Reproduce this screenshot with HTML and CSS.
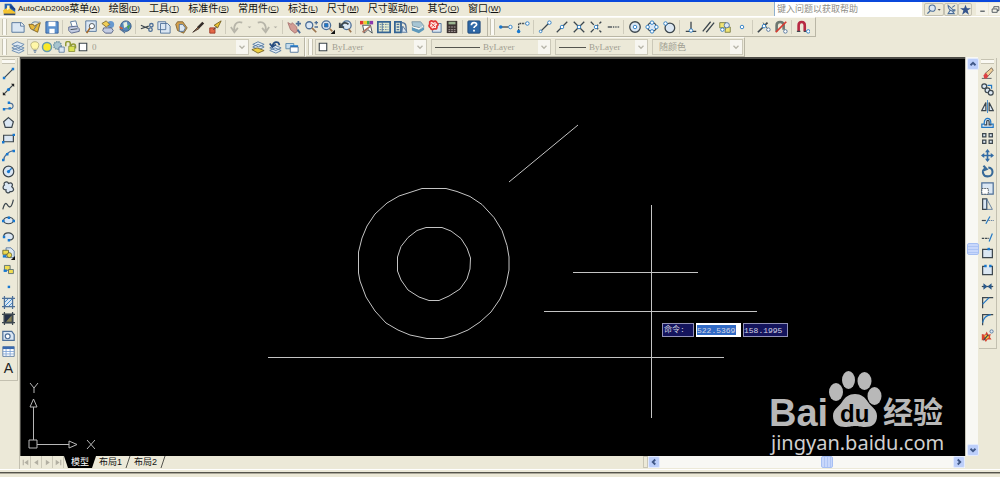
FILE: index.html
```html
<!DOCTYPE html>
<html lang="zh-CN">
<head>
<meta charset="utf-8">
<title>AutoCAD2008</title>
<link rel="stylesheet" href="styles.css">
</head>
<body>
<header class="menubar">
  <svg class="logo" viewBox="0 0 16 16"><path fill="#2463b5" d="M2 1h8l5 6v7H2z"/><path fill="#1c3f86" d="M9 2l6 5v2L9 6z"/><path fill="#f4c430" d="M0 9l7-4 3 3 5 3v3H1z"/><path fill="#3c4d6b" d="M1 13h14v2H1z"/><path fill="#fff5c0" d="M5 3l3 0 0 4-3 2z"/></svg>
  <nav class="menus">
    <button><i>AutoCAD2008</i>菜单<i>(<u>A</u>)</i></button>
    <button>绘图<i>(<u>D</u>)</i></button>
    <button>工具<i>(<u>T</u>)</i></button>
    <button>标准件<i>(<u>S</u>)</i></button>
    <button>常用件<i>(<u>C</u>)</i></button>
    <button>标注<i>(<u>L</u>)</i></button>
    <button>尺寸<i>(<u>M</u>)</i></button>
    <button>尺寸驱动<i>(<u>P</u>)</i></button>
    <button>其它<i>(<u>O</u>)</i></button>
    <button>窗口<i>(<u>W</u>)</i></button>
  </nav>
  <input class="search" type="text" aria-label="帮助" placeholder="键入问题以获取帮助">
  <div class="infobar">
    <button class="find" aria-label="搜索"><svg viewBox="0 0 16 16"><circle class="s-steel f-ice w2" cx="9" cy="6" r="4.500"/><path class="s-steel w3" d="M6 10l-4 4"/></svg><svg class="caret" viewBox="0 0 8 16"><path fill="#555" d="M1 7h5l-2.500 3z"/></svg></button>
    <button aria-label="通讯中心"><svg viewBox="0 0 16 16"><path class="s-steel f-ice w2" d="M3 2c0 6 4 9 9 8zM6 9l-3 5h9l-3-4M9 5l4-3M11 8l3 1"/></svg></button>
    <button aria-label="收藏夹"><svg viewBox="0 0 16 16"><path fill="#34548c" d="M8 1l2 5h6l-5 3.500 2 6L8 12l-5 3.500 2-6L0 6h6z"/></svg></button>
  </div>
  <div class="wincontrols">
    <button aria-label="最小化"><svg viewBox="0 0 16 16"><path class="s-dark w3" d="M4 11h8"/></svg></button>
    <button aria-label="还原"><svg viewBox="0 0 16 16"><path class="s-dark w2" d="M5 6V3h9v7h-3M2 7h9v6H2z"/></svg></button>
  </div>
</header>

<div class="toolrow">
  <div class="toolbar standard">
    <span class="grip"></span>
    <button aria-label="新建"><svg viewBox="0 0 16 16"><path class="s-steel f-ice" d="M1 3h11l3 3v8H1z"/><path class="s-steel f-white" d="M11 3v4h4"/></svg></button>
    <button aria-label="打开"><svg viewBox="0 0 16 16"><path fill="#e8b93c" stroke="#80601c" d="M1 5h5l1 2 7-4-3 11-8-4z"/><path class="s-steel" d="M4 4c4-4 8 0 9-2M10 6l-4 6"/></svg></button>
    <button aria-label="保存"><svg viewBox="0 0 16 16"><path fill="#5d92cf" stroke="#315c9b" d="M1 2h14v13H1z"/><path class="f-white" d="M4 2h8v5H4zM5 10h6v5H5z"/></svg></button>
    <span class="sep"></span>
    <button aria-label="打印"><svg viewBox="0 0 16 16"><path class="s-steel f-white" d="M4 2l6-1 2 7H6z"/><path fill="#c3cce2" stroke="#566489" d="M2 8l9-1 3 3v3l-9 2-3-3z"/><path class="s-dark" d="M4 11l8-1"/></svg></button>
    <button aria-label="打印预览"><svg viewBox="0 0 16 16"><path class="s-steel f-ice" d="M2 1h12v12H2z"/><circle class="s-dark f-white" cx="9" cy="7" r="3"/><path stroke="#a66b2c" stroke-width="2" d="M7 9l-4 6"/></svg></button>
    <button aria-label="发布"><svg viewBox="0 0 16 16"><circle cx="11" cy="5" r="4" fill="#6799cf"/><path fill="#f0ce55" stroke="#7e6a35" d="M1 4l5-3 4 4-4 3z"/><path fill="#c3cce2" stroke="#4f5d80" d="M3 9h9l2 3-2 3H5l-3-3z"/></svg></button>
    <button aria-label="三维DWF"><svg viewBox="0 0 16 16"><circle cx="9" cy="7" r="6" fill="#5789bd" stroke="#335782"/><path fill="#e6efe0" d="M6 3l4-1 1 5-4 2z"/><path fill="#47a34b" d="M10 7l4-2-2 6z"/><path fill="#d45f34" d="M1 7l5 2-3 3z"/><path class="s-steel w2" d="M2 10l4 3 2 2"/></svg></button>
    <span class="sep"></span>
    <button aria-label="剪切"><svg viewBox="0 0 16 16"><path class="s-dark w2" d="M1 6l9 4M1 10l9-3"/><circle class="s-steel w2" cx="13" cy="6" r="2"/><circle class="s-steel w2" cx="12" cy="11" r="2"/></svg></button>
    <button aria-label="复制"><svg viewBox="0 0 16 16"><path class="s-steel f-ice" d="M1 2h9v9H1zM4 4h8l3 3v8H4z"/></svg></button>
    <button aria-label="粘贴"><svg viewBox="0 0 16 16"><path fill="#d5a04a" stroke="#7d6132" d="M4 2h6l5 7-4 6-7-3-2-7z"/><path class="s-steel f-ice" d="M6 5h4l3 4-2 4H6z"/></svg></button>
    <button aria-label="特性匹配"><svg viewBox="0 0 16 16"><path stroke="#332c28" stroke-width="3" d="M14 3L8 9"/><path fill="#9b6c45" stroke="#483c35" d="M8 8l-6 6 7-4z"/></svg></button>
    <button aria-label="块编辑器"><svg viewBox="0 0 16 16"><path fill="#efc632" stroke="#715d1d" d="M15 1l-4 8-4-3z"/><path fill="#e46846" stroke="#9c3826" d="M2 9h6v6H2z"/><path class="s-dark" d="M10 8l-4 3"/></svg></button>
    <span class="sep"></span>
    <button aria-label="放弃"><svg viewBox="0 0 16 16"><path class="s-gray w3" d="M14 3C7 1 4 6 5 12M1 8l4 6 4-5"/></svg></button>
    <button class="drop" aria-label="放弃列表"><svg viewBox="0 0 8 16"><path fill="#b1afa4" d="M1 7h6L4 10z"/></svg></button>
    <button aria-label="重做"><svg viewBox="0 0 16 16"><path class="s-gray w3" d="M2 3c7-2 10 3 9 9M7 9l4 5 4-6"/></svg></button>
    <button class="drop" aria-label="重做列表"><svg viewBox="0 0 8 16"><path fill="#b1afa4" d="M1 7h6L4 10z"/></svg></button>
    <span class="sep"></span>
    <button aria-label="实时平移"><svg viewBox="0 0 16 16"><path fill="#d39c94" stroke="#a87470" d="M1 3l4 2 1-2 5 5 1 5-3 2-5-4z"/><path class="s-steel w3" d="M13 1v6M10 4h6M12 11l3 4"/></svg></button>
    <button aria-label="实时缩放"><svg viewBox="0 0 16 16"><circle class="s-steel f-ice w2" cx="6" cy="6" r="4"/><path stroke="#9c7650" stroke-width="2" d="M9 9l5 5"/><path class="s-steel w2" d="M12 3h4M14 1v4M12 8h4"/></svg></button>
    <button aria-label="窗口缩放"><svg viewBox="0 0 16 16"><circle class="s-steel f-ice w2" cx="6" cy="6" r="5"/><path class="s-steel f-blue" d="M4 4h4v4H4z"/><path stroke="#9c7650" stroke-width="2" d="M10 10l3 3"/><path fill="#111" d="M16 11v5h-5z"/></svg></button>
    <button aria-label="缩放上一个"><svg viewBox="0 0 16 16"><circle class="s-steel f-ice w2" cx="10" cy="6" r="5"/><path stroke="#9c7650" stroke-width="2" d="M12 10l3 4"/><path class="s-dark w3" d="M3 7c2-4 6-5 9-2M2 3v5h5"/></svg></button>
    <span class="sep"></span>
    <button aria-label="特性"><svg viewBox="0 0 16 16"><path fill="#e23535" d="M0 1h4v4H0z"/><path fill="#efcd2a" d="M4 1h4v4H4z"/><path fill="#45a94b" d="M8 1h3v4H8z"/><path fill="#8b37ad" d="M11 1h4v4h-4z"/><path class="s-dark f-white" d="M3 6h9l2 9-5-4-4 4z"/><path stroke="#ae7562" stroke-width="2" d="M3 14L12 7"/></svg></button>
    <button aria-label="设计中心"><svg viewBox="0 0 16 16"><path fill="#e8edcf" stroke="#346494" stroke-width="2" d="M1 2h14v12H1z"/><path class="s-steel" stroke-dasharray="2 1" d="M3 5h10M3 8h10M3 11h10"/><path class="s-steel" d="M6 2v12"/></svg></button>
    <button aria-label="工具选项板"><svg viewBox="0 0 16 16"><path fill="#dfe7d2" stroke="#346494" stroke-width="2" d="M1 2h7v12H1z"/><path class="s-steel w2" d="M3 5h3M3 8h3M3 11h3M9 3c5 0 5 4 5 10"/><path class="s-steel f-ice" d="M10 7l5 7H9z"/></svg></button>
    <button aria-label="图纸集管理器"><svg viewBox="0 0 16 16"><path fill="#a7c6d4" stroke="#7995a4" d="M1 2h10l4 5-4 2-9-2z"/><path fill="#5e99bb" d="M1 8l8 3 6-3v3l-6 4-8-3z"/><path class="s-white" d="M2 8l7 2 5-3"/></svg></button>
    <button aria-label="标记集管理器"><svg viewBox="0 0 16 16"><path class="s-steel f-ice" d="M5 4h10v10H5z"/><path fill="#ffe4df" stroke="#e13635" stroke-width="2" d="M2 2q2-2 4 0q3-2 4 1q3 2 0 4q1 4-3 3q-3 2-4-1q-3-2-1-4z"/><path stroke="#e13635" d="M4 4l4 4M8 4l-4 4"/></svg></button>
    <button aria-label="快速计算器"><svg viewBox="0 0 16 16"><path fill="#3c3433" d="M2 1h12v14H2z"/><path fill="#9bb591" d="M4 2h8v3H4z"/><path stroke="#b9adad" stroke-width="1" stroke-dasharray="2 1" d="M4 8h8M4 11h8M4 13h8"/></svg></button>
    <span class="sep"></span>
    <button aria-label="帮助"><svg viewBox="0 0 16 16"><rect x="1" y="1" width="14" height="14" rx="1" fill="#2d67a6" stroke="#1e4777"/><path class="s-white w3" d="M5 6c0-4 6-4 6-1 0 2-3 2-3 4M8 11v2"/></svg></button>
  </div>
  <div class="toolbar">
    <span class="grip"></span>
    <button aria-label="临时追踪点"><svg viewBox="0 0 16 16"><path class="s-dark w2" d="M2 8h9"/><circle class="f-blue" cx="2" cy="8" r="2"/><circle class="s-blue f-white" cx="13" cy="8" r="2"/></svg></button>
    <button aria-label="捕捉自"><svg viewBox="0 0 16 16"><path class="s-dark w2" stroke-dasharray="2 1" d="M3 12V4h8"/><circle class="f-blue" cx="3" cy="13" r="2"/><circle class="s-blue f-white" cx="13" cy="4" r="2"/></svg></button>
    <span class="sep"></span>
    <button aria-label="端点"><svg viewBox="0 0 16 16"><path class="s-dark w2" d="M3 13L12 4"/><circle class="s-blue f-white" cx="13" cy="3" r="2"/><circle class="s-blue f-white" cx="3" cy="13" r="1.500"/></svg></button>
    <button aria-label="中点"><svg viewBox="0 0 16 16"><path class="s-dark w2" d="M2 14L14 2"/><circle class="s-blue f-white" cx="8" cy="8" r="2"/></svg></button>
    <button aria-label="交点"><svg viewBox="0 0 16 16"><path class="s-dark w2" d="M2 2l12 12M2 14L14 2"/><circle class="s-blue f-white" cx="8" cy="8" r="2"/></svg></button>
    <button aria-label="外观交点"><svg viewBox="0 0 16 16"><path class="s-dark w2" stroke-dasharray="5 2" d="M2 2l12 12M2 14L14 2"/><circle class="s-blue f-white" cx="8" cy="8" r="2"/></svg></button>
    <button aria-label="延长线"><svg viewBox="0 0 16 16"><path class="s-dark w2" d="M2 8h5"/><path class="s-dark w2" stroke-dasharray="1 1" d="M8 8h7"/></svg></button>
    <span class="sep"></span>
    <button aria-label="圆心"><svg viewBox="0 0 16 16"><circle class="s-dark f-ice w2" cx="8" cy="8" r="6"/><circle class="s-blue f-white" cx="8" cy="8" r="2"/></svg></button>
    <button aria-label="象限点"><svg viewBox="0 0 16 16"><circle class="s-dark f-ice w2" cx="8" cy="8" r="5"/><g class="s-blue f-white"><circle cx="8" cy="3" r="2"/><circle cx="8" cy="13" r="2"/><circle cx="3" cy="8" r="2"/><circle cx="13" cy="8" r="2"/></g></svg></button>
    <button aria-label="切点"><svg viewBox="0 0 16 16"><circle class="s-dark f-ice w2" cx="9" cy="9" r="5.500"/><circle class="s-blue f-white" cx="4" cy="4" r="2"/></svg></button>
    <span class="sep"></span>
    <button aria-label="垂足"><svg viewBox="0 0 16 16"><path class="s-dark w2" d="M8 2v9M2 13h12"/><circle class="s-blue f-white" cx="8" cy="12" r="2"/></svg></button>
    <button aria-label="平行线"><svg viewBox="0 0 16 16"><path class="s-dark w2" d="M2 13L11 2M6 14l9-11"/></svg></button>
    <button aria-label="插入点"><svg viewBox="0 0 16 16"><path fill="#f2e573" stroke="#777c43" d="M2 3h7v6H2zM9 8h5v6H8z"/><circle class="s-steel f-ice" cx="10" cy="6" r="3"/><circle class="s-blue f-white" cx="5" cy="11" r="2"/></svg></button>
    <button aria-label="节点"><svg viewBox="0 0 16 16"><circle class="s-blue f-white" cx="8" cy="8" r="2"/></svg></button>
    <span class="sep"></span>
    <button aria-label="最近点"><svg viewBox="0 0 16 16"><path class="s-dark w3" d="M1 14L12 3"/><path class="s-dark" d="M7 3l5 7"/><circle class="s-blue f-white" cx="8" cy="7" r="2"/><circle class="s-steel f-white" cx="13" cy="11" r="2"/></svg></button>
    <button aria-label="无捕捉"><svg viewBox="0 0 16 16"><path stroke="#6d7771" stroke-width="3" d="M3 13V6c0-5 8-5 8 0v5"/><path stroke="#d93b31" stroke-width="2" d="M2 14L14 2"/><circle class="s-steel f-white" cx="13" cy="13" r="2"/></svg></button>
    <span class="sep"></span>
    <button aria-label="对象捕捉设置"><svg viewBox="0 0 16 16"><path stroke="#b72942" stroke-width="3" d="M3 13V6c0-5 7-5 7 0v7"/><path class="s-dark w2" d="M1 13h4M9 13h3"/><circle class="s-blue f-white" cx="14" cy="13" r="2"/></svg></button>
  </div>
</div>

<div class="toolrow">
  <div class="toolbar">
    <span class="grip"></span>
    <button class="wide" aria-label="图层特性管理器"><svg viewBox="0 0 16 16"><path fill="#dfeaf4" stroke="#6688ad" d="M1 12l6-3 8 3-6 3zM1 9l6-3 8 3-6 3zM1 5l6-3 8 3-6 4z"/></svg></button>
    <div class="combo combo-layer">
      <svg viewBox="0 0 16 16"><path fill="#fff7a8" stroke="#a5a06d" d="M5 11C-1 3 5 1 8 1s8 2 3 10z"/><path class="s-steel w2" d="M6 13h4M7 15h2"/></svg>
      <svg viewBox="0 0 16 16"><circle cx="8" cy="8" r="6" fill="#f9e928" stroke="#669ab1" stroke-width="2"/></svg>
      <svg viewBox="0 0 16 16"><circle cx="6" cy="6" r="5" fill="#a7c4cf" stroke="#7397a7" stroke-width="2" stroke-dasharray="2 1"/><path class="s-steel f-ice" d="M8 8h7v7H8z"/></svg>
      <svg viewBox="0 0 16 16"><path stroke="#929b38" stroke-width="2" d="M1 7V3c0-3 6-3 6 0v4M8 7c0-4 6-4 6 0v3"/><path fill="#dae253" stroke="#7e872f" d="M5 7h8v7H5z"/></svg>
      <svg viewBox="0 0 16 16"><path class="s-dark f-white w2" d="M3 3h10v10H3z"/></svg>
      <select aria-label="图层"><option>0</option></select>
      <span class="arrow"><svg viewBox="0 0 16 16"><path class="s-gray w3" d="M4 6l4 4 4-4"/></svg></span>
    </div>
    <button aria-label="将对象的图层置为当前"><svg viewBox="0 0 16 16"><path fill="#dfeaf4" stroke="#5478a0" d="M2 8l6-3 7 3-6 3zM2 5l6-3 7 3-6 3z"/><path fill="#edcf42" stroke="#75652a" d="M1 11l6-2 8 3-7 3z"/></svg></button>
    <button aria-label="上一个图层"><svg viewBox="0 0 16 16"><path fill="#dfeaf4" stroke="#5478a0" d="M2 12l6-3 7 3-6 3zM2 9l6-3 7 3-6 3z"/><path stroke="#274d80" stroke-width="2" d="M13 6c-1-6-7-4-8 1M2 4l3 4 4-3"/></svg></button>
    <button aria-label="图层状态管理器"><svg viewBox="0 0 16 16"><path fill="#c6dceb" stroke="#5888aa" d="M1 4h9v6H1z"/><path class="f-blue" d="M6 6h9v3H6z"/><path class="s-steel f-white" d="M6 8h9v6H6z"/></svg></button>
  </div>
  <div class="toolbar props">
    <span class="grip"></span>
    <div class="combo combo-color">
      <svg viewBox="0 0 16 16"><path class="s-dark f-white w2" d="M3 3h10v10H3z"/></svg>
      <select aria-label="颜色"><option>ByLayer</option></select>
      <span class="arrow"><svg viewBox="0 0 16 16"><path class="s-gray w3" d="M4 6l4 4 4-4"/></svg></span>
    </div>
    <div class="combo combo-type">
      <span class="stroke"></span>
      <select aria-label="线型"><option>ByLayer</option></select>
      <span class="arrow"><svg viewBox="0 0 16 16"><path class="s-gray w3" d="M4 6l4 4 4-4"/></svg></span>
    </div>
    <div class="combo combo-weight">
      <span class="stroke"></span>
      <select aria-label="线宽"><option>ByLayer</option></select>
      <span class="arrow"><svg viewBox="0 0 16 16"><path class="s-gray w3" d="M4 6l4 4 4-4"/></svg></span>
    </div>
    <div class="combo combo-plot">
      <select aria-label="打印样式"><option>随颜色</option></select>
      <span class="arrow"><svg viewBox="0 0 16 16"><path class="s-gray w3" d="M4 6l4 4 4-4"/></svg></span>
    </div>
  </div>
</div>

<div class="workspace">
  <aside class="side">
    <div class="palette">
      <span class="hgrip"></span>
      <div class="stack draw">
        <button aria-label="直线"><svg viewBox="0 0 16 16"><path class="s-dark w2" d="M3 13L13 3"/><path class="f-blue" d="M1 12h3v3H1zM12 1h3v3h-3z"/></svg></button>
        <button aria-label="构造线"><svg viewBox="0 0 16 16"><path class="s-dark w2" d="M2 14L14 2"/><path fill="#222" d="M1 15v-4l4 4zM15 1v4l-4-4z"/><circle class="f-blue" cx="8" cy="8" r="2"/></svg></button>
        <button aria-label="多段线"><svg viewBox="0 0 16 16"><path class="s-steel w2" d="M2 12h8c5 0 5-7-1-7"/><path class="f-blue" d="M1 11h3v3H1zM8 10h3v3H8zM7 3h3v3H7z"/></svg></button>
        <button aria-label="正多边形"><svg viewBox="0 0 16 16"><path class="s-dark f-ice w2" d="M8 2l6 5-2 7H4L2 7z"/></svg></button>
        <button aria-label="矩形"><svg viewBox="0 0 16 16"><path class="s-dark f-ice w2" d="M2 4h12v8H2z"/><path class="f-blue" d="M0 11h3v3H0zM13 2h3v3h-3z"/></svg></button>
        <button aria-label="圆弧"><svg viewBox="0 0 16 16"><path class="s-steel w2" d="M2 14C2 8 8 3 14 2"/><path class="f-blue" d="M0 12h3v3H0zM5 5h3v3H5zM13 1h3v3h-3z"/></svg></button>
        <button aria-label="圆"><svg viewBox="0 0 16 16"><circle class="s-dark f-ice w2" cx="8" cy="8" r="6.500"/><path class="s-blue w2" d="M8 8l4-4"/><circle class="f-blue" cx="8" cy="8" r="2"/></svg></button>
        <button aria-label="修订云线"><svg viewBox="0 0 16 16"><path class="s-dark f-ice w2" d="M3 5c-2-4 4-5 5-2 4-2 6 1 4 4 4 3 2 7-2 6-2 3-6 1-5-2-5 0-4-5-2-6z"/></svg></button>
        <button aria-label="样条曲线"><svg viewBox="0 0 16 16"><path class="s-dark w2" d="M1 14c2-8 4-9 6-5 3 4 5 2 7-7"/></svg></button>
        <button aria-label="椭圆"><svg viewBox="0 0 16 16"><ellipse class="s-dark f-ice w2" cx="8" cy="8" rx="6" ry="4"/><path class="f-blue" d="M0 7h3v3H0zM13 7h3v3h-3zM7 3h3v3H7z"/></svg></button>
        <button aria-label="椭圆弧"><svg viewBox="0 0 16 16"><path class="s-dark f-ice w2" d="M2 8c1-7 13-5 12 1 0 2-3 4-6 3"/><path class="f-blue" d="M1 7h3v3H1zM7 11h3v3H7z"/></svg></button>
        <button aria-label="插入块"><svg viewBox="0 0 16 16"><path class="s-steel f-ice" d="M5 1h6l4 4v8H5z"/><path fill="#f0dc50" stroke="#656530" d="M1 4h7v5H1z"/><circle cx="9" cy="10" r="3" fill="#f0dc50" stroke="#656530"/><path class="f-blue" d="M1 10h4v3H1z"/><path fill="#111" d="M16 11v5h-5z"/></svg></button>
        <button aria-label="创建块"><svg viewBox="0 0 16 16"><path fill="#f0dc50" stroke="#4c6473" d="M3 3h7v6H3z"/><path fill="#f0dc50" stroke="#4c6473" d="M8 8h6v5H8z"/><path class="f-blue" d="M2 8h4v3H2z"/></svg></button>
        <button aria-label="点"><svg viewBox="0 0 16 16"><path class="f-blue" d="M7 7h3v3H7z"/></svg></button>
        <button aria-label="图案填充"><svg viewBox="0 0 16 16"><path class="s-blue f-ice" d="M3 3h10v10H3zM3 8l5-5M3 13L13 3M8 13l5-5"/><path class="s-steel w2" d="M3 0v16M13 0v16M0 3h16M0 13h16"/></svg></button>
        <button aria-label="渐变色"><svg viewBox="0 0 16 16"><path fill="#253149" d="M2 2h12v12H2z"/><path fill="#8a8455" d="M5 12l7-8v8z"/><path class="s-dark w2" d="M3 0v16M13 0v16M0 3h16M0 13h16"/></svg></button>
        <button aria-label="面域"><svg viewBox="0 0 16 16"><path class="s-steel f-ice w2" d="M1 3h11l3 4v7H1z"/><circle class="s-steel f-white w2" cx="7" cy="9" r="3"/></svg></button>
        <button aria-label="表格"><svg viewBox="0 0 16 16"><path class="s-steel f-white" d="M1 2h14v12H1z"/><path fill="#3969af" d="M1 2h14v3H1z"/><path stroke="#7aa0d4" d="M1 8h14M1 11h14M5 5v9M10 5v9"/></svg></button>
        <button class="letter" aria-label="多行文字">A</button>
      </div>
    </div>
  </aside>

  <main class="viewframe">
    <div class="upper">
      <div class="canvas">
        <svg class="drawing" viewBox="21 59 943 397">
          <path d="M509 182L578 125M268 357.500H724M544 311.500H757"/>
          <path d="M573 272.500H698M651.500 205V418"/>
          <polygon points="422,188.500 446,188.500 457,191.500 470,196.500 482,204.500 494,217.500 502,230.500 507,245.500 509,257 509,270 506,285 500,299 491,312 480,322 468,330 456,335 443,338.500 427,338.500 410,335 398,330 386,323 375,311 366,297 360,281 358.500,273 358.500,252 362,238 367,226 375,214 387,203 399,196"/>
          <polygon points="426,227.500 442,227.500 451,231 461,238.500 467,248 470.500,258 470,269 467,279 460,289 449,296 439,300.500 429,300.500 419,297 408,290 401,280 397.500,271 397.500,257 401,246.500 408,237.500 417,230.500"/>
        </svg>
        <svg class="ucs" viewBox="0 0 70 70">
          <path d="M4 59h8v8H4zM8.500 59V26M12 63.500h32M5 26l3.500-8 3.500 8zM44 60l8 3.500-8 3.500zM5 2l4 5 4-5M9 7v5M62 59l8 9M70 59l-8 9"/>
        </svg>
        <div class="dyn">
          <label for="dx">命令:</label>
          <input id="dx" class="picked" value="522.5369">
          <input aria-label="Y" value="158.1995">
        </div>
        <svg class="brand" viewBox="0 0 180 90">
          <g class="paw"><ellipse cx="67" cy="26" rx="7" ry="9"/><ellipse cx="79.500" cy="14" rx="6.500" ry="9"/><ellipse cx="95.500" cy="15" rx="7" ry="9"/><ellipse cx="105.500" cy="30" rx="7" ry="9"/><path d="M86 28c-6 0-10 3-13 8-3 5-9 7-9 14 0 8 6 11 12 11 5 0 6-1 10-1s5 1 10 1c7 0 12-3 12-11 0-7-6-9-9-14-3-5-7-8-13-8z"/></g>
          <text class="bai" x="0" y="60">Bai</text>
          <text class="du" x="71" y="56">du</text>
          <text class="exp" x="114" y="57">经验</text>
          <text class="url" x="2" y="84">jingyan.baidu.com</text>
        </svg>
      </div>
      <div class="vscroll">
        <button aria-label="向上"><svg viewBox="0 0 16 16"><path d="M4 10l4-4 4 4"/></svg></button>
        <span class="thumb"></span>
        <button aria-label="向下"><svg viewBox="0 0 16 16"><path d="M4 6l4 4 4-4"/></svg></button>
      </div>
    </div>
    <div class="lower">
      <div class="tabnav">
        <button aria-label="第一个"><svg viewBox="0 0 16 16"><path d="M3 3h2v10H3zM13 3v10L6 8z"/></svg></button>
        <button aria-label="上一个"><svg viewBox="0 0 16 16"><path d="M11 3v10L4 8z"/></svg></button>
        <button aria-label="下一个"><svg viewBox="0 0 16 16"><path d="M5 3v10l7-5z"/></svg></button>
        <button aria-label="最后一个"><svg viewBox="0 0 16 16"><path d="M3 3v10l7-5zM11 3h2v10h-2z"/></svg></button>
      </div>
      <div class="tabs">
        <button class="tab active">模型</button>
        <button class="tab">布局1</button>
        <svg class="slash" viewBox="0 0 6 12"><path d="M1 12L5 0"/></svg>
        <button class="tab">布局2</button>
        <svg class="slash" viewBox="0 0 6 12"><path d="M1 12L5 0"/></svg>
      </div>
      <div class="hscroll">
        <span class="splitter"></span>
        <button aria-label="向左"><svg viewBox="0 0 16 16"><path d="M10 4L6 8l4 4"/></svg></button>
        <span class="track"><span class="thumb"></span></span>
        <button aria-label="向右"><svg viewBox="0 0 16 16"><path d="M6 4l4 4-4 4"/></svg></button>
      </div>
    </div>
  </main>

  <aside class="side right">
    <div class="palette">
      <span class="hgrip"></span>
      <div class="stack modify">
        <button aria-label="删除"><svg viewBox="0 0 16 16"><path class="s-dark" d="M1 14h12"/><path fill="#f1cf99" stroke="#655a4d" d="M5 8L13 1l2 3-7 8z"/><path fill="#dc4145" d="M3 10l3-3 3 4-2 3H4z"/></svg></button>
        <button aria-label="复制对象"><svg viewBox="0 0 16 16"><circle class="s-dark f-ice w2" cx="4" cy="4" r="3"/><circle class="s-dark f-ice w2" cx="8" cy="9" r="3"/><circle class="s-dark f-ice w2" cx="12" cy="12" r="3"/><path class="s-blue w2" d="M8 3h5v4"/></svg></button>
        <button aria-label="镜像"><svg viewBox="0 0 16 16"><path class="s-dark f-ice w2" d="M6 3v10H1zM10 3v10h5z"/><path class="s-blue" d="M8 0v16"/></svg></button>
        <button aria-label="偏移"><svg viewBox="0 0 16 16"><path class="s-blue f-ice w2" d="M1 14h14v-4h-3c1-9-8-9-8-2v2H1z"/><path class="s-dark w2" d="M4 11h3V7c0-2 3-2 3 0v4h3"/></svg></button>
        <button aria-label="阵列"><svg viewBox="0 0 16 16"><path class="s-dark f-ice w2" d="M2 2h4v4H2zM10 2h4v4h-4zM2 10h4v4H2zM10 10h4v4h-4z"/></svg></button>
        <button aria-label="移动"><svg viewBox="0 0 16 16"><path stroke="#326ba5" stroke-width="2" d="M8 2v12M2 8h12"/><path fill="#326ba5" d="M8 0l3 4H5zM8 16l3-4H5zM0 8l4-3v6zM16 8l-4-3v6z"/></svg></button>
        <button aria-label="旋转"><svg viewBox="0 0 16 16"><path stroke="#376998" stroke-width="2.500" d="M5 4c-5 4-2 10 3 10 8 0 8-10 1-11M3 1l4 4-5 2"/></svg></button>
        <button aria-label="缩放"><svg viewBox="0 0 16 16"><path class="s-steel f-ice w2" d="M1 1h14v14H1z"/><path class="s-dark f-white" stroke-dasharray="2 1" d="M1 8h8v7H1z"/></svg></button>
        <button aria-label="拉伸"><svg viewBox="0 0 16 16"><path class="s-dark f-ice w2" d="M2 1h5v13H2z"/><path class="s-steel" d="M7 1l7 13H7z"/></svg></button>
        <button aria-label="修剪"><svg viewBox="0 0 16 16"><path class="s-dark w2" d="M1 8h5"/><path class="s-blue w2" d="M6 12l5-9"/><path class="s-steel" stroke-dasharray="2 1" d="M9 8h7"/></svg></button>
        <button aria-label="延伸"><svg viewBox="0 0 16 16"><path class="s-dark w2" stroke-dasharray="3 1" d="M1 9h9"/><path class="s-blue w2" d="M10 13l4-10"/></svg></button>
        <button aria-label="打断于点"><svg viewBox="0 0 16 16"><path class="s-dark f-ice w2" d="M2 3h12v10H2z"/><path class="f-blue" d="M8 1h3v3H8z"/></svg></button>
        <button aria-label="打断"><svg viewBox="0 0 16 16"><path class="s-dark f-ice w2" d="M5 3H2v10h12V3h-3"/><path class="f-blue" d="M4 1h3v3H4zM10 1h3v3h-3z"/></svg></button>
        <button aria-label="合并"><svg viewBox="0 0 16 16"><path class="s-dark w2" d="M1 8h14"/><path fill="#29598c" d="M3 4l5 4-5 4zM13 4L8 8l5 4z"/></svg></button>
        <button aria-label="倒角"><svg viewBox="0 0 16 16"><path class="s-dark w2" d="M2 15V2h13"/><path class="s-blue w2" d="M2 10l8-8"/></svg></button>
        <button aria-label="圆角"><svg viewBox="0 0 16 16"><path class="s-dark w2" d="M2 15V2h13"/><path class="s-blue w2" d="M2 12c1-6 4-9 10-10"/></svg></button>
        <button aria-label="分解"><svg viewBox="0 0 16 16"><path fill="#d94432" d="M1 6l4 1 2-4 2 4 3-1-1 4 2 3-5 0-2 3-2-3-3 1z"/><path fill="#f3cb43" d="M4 8l4-1 2 3-4 3z"/><path class="s-dark w2" d="M3 14l6-7"/><circle class="s-steel f-ice" cx="13" cy="3" r="2"/></svg></button>
      </div>
    </div>
  </aside>
</div>
<footer class="status"></footer>
</body>
</html>
```
FILE: styles.css
```css
* { box-sizing: border-box; }
body {
  margin: 0;
  height: 100vh;
  display: flex;
  flex-direction: column;
  overflow: hidden;
  background: #ece9d8;
  color: #111;
  font: 10px/12px "Liberation Sans", "Noto Sans CJK SC", sans-serif;
}
button, input, select { font: inherit; color: inherit; margin: 0; padding: 0; border: 0; background: none; min-width: 0; }
button { display: flex; align-items: center; justify-content: center; }
svg { display: block; flex: none; width: 14px; height: 14px; fill: none; }

/* icon paint */
.s-dark { stroke: #3d474e; }
.s-steel { stroke: #4d6f98; }
.s-blue { stroke: #2378c4; }
.s-gray { stroke: #b7b5a9; }
.s-white { stroke: #fff; }
.f-ice { fill: #dbe7f3; }
.f-white { fill: #fff; }
.f-blue { fill: #1778d0; }
.w2 { stroke-width: 1.5; }
.w3 { stroke-width: 2; }

/* menu bar */
.menubar {
  flex: none;
  display: flex;
  align-items: center;
  height: 17px;
  padding-left: 3px;
  border-top: 2px solid #0a48dc;
  border-bottom: 1px solid #fff;
}
.logo { width: 13px; height: 13px; }
.menus { display: flex; gap: 9px; margin-left: 2px; white-space: nowrap; }
.menus i { font-style: normal; font-size: 8px; }
.search {
  width: 148px;
  height: 14px;
  margin-left: auto;
  padding: 0 2px;
  background: #fff;
  border-left: 1px solid #8fb0cf;
  font-size: 9px;
}
.search::placeholder { color: #8f8e86; opacity: 1; }
.infobar { display: flex; margin-left: 2px; }
.infobar button { width: 14px; height: 13px; border: 1px solid #c5c2b2; border-radius: 2px; }
.infobar .find { width: 20px; }
.infobar svg { width: 11px; height: 11px; }
.infobar .caret { width: 5px; }
.wincontrols { display: flex; gap: 1px; width: 24px; margin-left: 4px; overflow: hidden; }
.wincontrols button { flex: none; width: 12px; height: 12px; background: #f5f3e9; }
.wincontrols svg { width: 9px; height: 9px; }

/* tool rows */
.toolrow { flex: none; display: flex; height: 20px; }
.toolbar {
  display: flex;
  align-items: center;
  padding-right: 4px;
  border-top: 1px solid #faf9f3;
  border-right: 1px solid #b9b6a5;
  border-bottom: 1px solid #b9b6a5;
}
.toolbar button { width: 17px; height: 17px; }
.toolbar .drop { width: 9px; }
.toolbar .drop svg { width: 5px; }
.standard { padding-right: 5px; }
.grip { width: 5px; height: 16px; margin: 0 2px; border: solid #c6c3b2; border-width: 0 1px; background: #faf9f3; }
.toolbar .wide { width: 18px; }
.sep { width: 1px; height: 14px; margin: 0 2px; background: #cfccbc; }
.props { padding-right: 1px; border-left: 1px solid #faf9f3; }
.combo {
  display: flex;
  align-items: center;
  height: 16px;
  border: 1px solid #cbc8b8;
  color: #a09e91;
  font: 9px/12px "Liberation Serif", "Noto Sans CJK SC", serif;
}
.combo select { flex: 1; appearance: none; height: 12px; padding-left: 3px; opacity: 1; }
.combo > svg { width: 12px; height: 12px; }
.arrow { display: flex; align-items: center; justify-content: center; width: 12px; height: 14px; background: #f7f6f0; }
.arrow svg { width: 10px; height: 10px; }
.combo-layer { width: 222px; padding-left: 1px; }
.combo-color { width: 112px; margin-right: 4px; padding-left: 1px; }
.combo-type { width: 120px; margin-right: 4px; }
.combo-weight { width: 93px; margin-right: 4px; }
.combo-plot { width: 91px; }
.combo-plot select { padding-left: 6px; }
.stroke { height: 1px; margin-left: 3px; background: #55554f; }
.combo-type .stroke { width: 45px; }
.combo-weight .stroke { width: 27px; }

/* work area */
.workspace { flex: 1; display: flex; min-height: 0; }
.side { flex: none; width: 20px; padding-top: 1px; border-right: 1px solid #c3c0b0; }
.side.right { width: 22px; border: 0; padding-left: 1px; }
.palette { width: 18px; padding: 1px 0 4px; border: solid #c3c0b0; border-width: 0 1px 1px 0; }
.hgrip { display: block; height: 5px; margin: 0 2px 1px; border: solid #c6c3b2; border-width: 1px 0; background: #faf9f3; }
.stack { display: flex; flex-direction: column; }
.stack button { flex: 1; min-height: 0; width: 17px; }
.stack svg { width: 13px; height: 13px; }
.draw { height: 311px; }
.modify { height: 279px; }
.stack .letter { font-size: 14px; font-weight: normal; color: #222; }

.viewframe { flex: 1; display: flex; flex-direction: column; min-width: 0; }
.upper { flex: 1; display: flex; min-height: 0; }
.canvas {
  position: relative;
  flex: 1;
  min-width: 0;
  overflow: hidden;
  background: #000;
  border-top: 2px solid #4d4c47;
  border-left: 1px solid #4d4c47;
}
.drawing { width: 943px; height: 397px; stroke: #c4c4c4; }
.ucs { position: absolute; left: 4px; bottom: 5px; width: 70px; height: 70px; stroke: #b8b8b8; }
.dyn { position: absolute; left: 641px; top: 264px; display: flex; gap: 2px; color: #d6d6e4; font: 8px/10px "Liberation Mono", "Noto Sans CJK SC", monospace; }
.dyn label, .dyn input { height: 14px; border: 1px solid #9292b8; background: #14145c; }
.dyn label { width: 32px; padding: 1px 0 0 1px; }
.dyn input { width: 45px; }
.dyn .picked { border-color: #fff; background: linear-gradient(#316ac5, #316ac5) 0 1px / 39px 10px no-repeat #fff; }
.brand { position: absolute; right: 16px; bottom: 0; width: 180px; height: 90px; fill: #b8b8b8; }
.brand text { font-family: "Liberation Sans", "Noto Sans CJK SC", sans-serif; font-weight: bold; }
.brand .bai { font-size: 38px; }
.brand .du { font-size: 24px; fill: #000; }
.brand .exp { font-size: 30px; }
.brand .url { font: 20px "Noto Sans", sans-serif; fill: #d0d0d0; }

/* scroll bars */
.vscroll { display: flex; flex-direction: column; width: 13px; padding: 1px 0 0 1px; border-left: 1px solid #c9c7bb; background: #f8f8f4; }
.vscroll .thumb { margin: auto 0; transform: translateY(-8px); }
.vscroll button, .hscroll button { flex: none; width: 12px; height: 12px; border: 1px solid #e4ebfd; border-radius: 2px; background: #bdcffa; }
.vscroll svg, .hscroll svg { width: 10px; height: 10px; stroke: #3f5787; stroke-width: 3; }
.thumb { display: block; width: 12px; height: 12px; border: 1px solid #a6bff3; border-radius: 2px; background: repeating-linear-gradient(#c8d7fb 0 2px, #aec5f5 2px 3px); }
.lower { flex: none; display: flex; height: 12px; margin-bottom: 1px; padding-right: 13px; }
.tabnav { display: flex; }
.tabnav button { width: 11px; border-right: 1px solid #cbc8b8; }
.tabnav svg { width: 9px; height: 9px; fill: #b2afa2; }
.tabs { display: flex; font-size: 9px; white-space: nowrap; }
.tab { padding: 0 3px; }
.tab.active { padding: 0 7px; background: #000; color: #fff; clip-path: polygon(0 0, 100% 0, 28px 100%, 4px 100%); }
.slash { width: 6px; height: 12px; stroke: #55554f; }
.hscroll { display: flex; width: 322px; margin-left: auto; background: #f8f8f4; }
.splitter { width: 5px; border: 1px solid #c9c6b6; background: #ece9d8; }
.track { flex: 1; display: flex; padding-left: 161px; }
.track .thumb { background: repeating-linear-gradient(90deg, #c8d7fb 0 2px, #aec5f5 2px 3px); }
.status { flex: none; height: 8px; border-top: 1px solid #fff; background: linear-gradient(#ece9d8 2px, #55544c 2px 3px, #aaa798 3px 4px, #ece9d8 4px); }
```
